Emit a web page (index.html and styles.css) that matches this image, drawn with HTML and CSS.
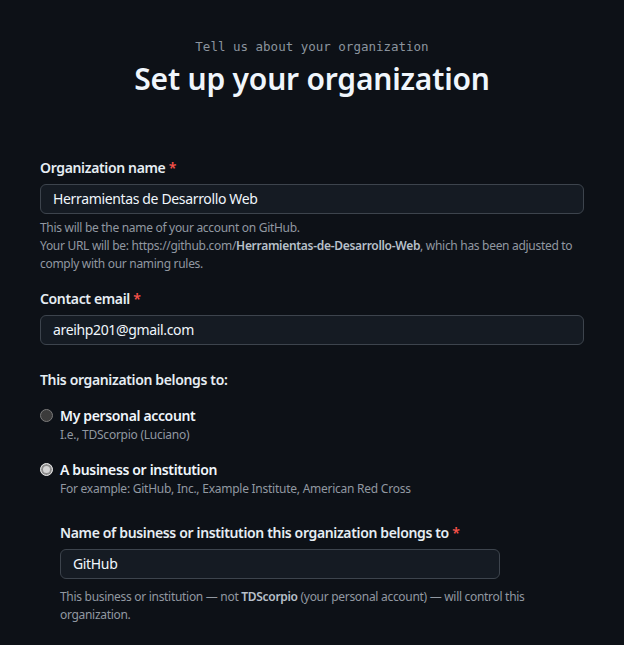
FILE: index.html
```html
<!DOCTYPE html>
<html lang="en">
<head>
<meta charset="utf-8">
<link rel="stylesheet" href="styles.css">
</head>
<body>
<main class="page">
  <header class="head">
    <p class="eyebrow">Tell us about your organization</p>
    <h1 class="title">Set up your organization</h1>
  </header>

  <form class="form">
    <div class="field">
      <label class="label">Organization name <span class="req">*</span></label>
      <div class="input">Herramientas de Desarrollo Web</div>
      <p class="note">This will be the name of your account on GitHub.<br>Your URL will be: https://github.com/<strong>Herramientas-de-Desarrollo-Web</strong>, which has been adjusted to comply with our naming rules.</p>
    </div>

    <div class="field">
      <label class="label">Contact email <span class="req">*</span></label>
      <div class="input">areihp201@gmail.com</div>
    </div>

    <div class="group">
      <p class="label">This organization belongs to:</p>
      <div class="option">
        <span class="radio"></span>
        <div class="opt-text">
          <div class="opt-title">My personal account</div>
          <div class="opt-sub">I.e., TDScorpio (Luciano)</div>
        </div>
      </div>
      <div class="option">
        <span class="radio checked"></span>
        <div class="opt-text">
          <div class="opt-title">A business or institution</div>
          <div class="opt-sub">For example: GitHub, Inc., Example Institute, American Red Cross</div>
        </div>
      </div>
      <div class="nested">
        <label class="label">Name of business or institution this organization belongs to <span class="req">*</span></label>
        <div class="input short">GitHub</div>
        <p class="note wide">This business or institution — not <strong>TDScorpio</strong> (your personal account) — will control this organization.</p>
      </div>
    </div>
  </form>
</main>
</body>
</html>
```
FILE: styles.css
```css
html, body {
  margin: 0;
  padding: 0;
  background: #0d1117;
}
body {
  font-family: "Noto Sans", "Open Sans", sans-serif;
  color: #e6edf3;
  letter-spacing: -0.35px;
}
.page {
  padding: 39px 40px 0;
}
.head {
  text-align: center;
}
.eyebrow {
  margin: 0;
  font-family: "DejaVu Sans Mono", monospace;
  font-size: 12.5px;
  line-height: 16px;
  letter-spacing: 0;
  color: #8b949e;
}
.title {
  margin: 2px 0 0;
  font-size: 30px;
  line-height: 44px;
  font-weight: 600;
  letter-spacing: -0.2px;
  color: #f0f6fc;
}
.form {
  margin-top: 57px;
}
.field {
  margin-bottom: 16px;
}
.label {
  display: block;
  margin: 0 0 6px;
  font-size: 14px;
  line-height: 20px;
  font-weight: 600;
  color: #e6edf3;
}
.req {
  color: #f85149;
}
.input {
  box-sizing: border-box;
  height: 30px;
  padding: 0 12px;
  border: 1px solid #3d444d;
  border-radius: 6px;
  background: #151b23;
  font-size: 14px;
  line-height: 28px;
  color: #f0f6fc;
}
.input.short {
  width: 440px;
}
.note {
  margin: 5px 0 0;
  font-size: 12px;
  line-height: 18px;
  letter-spacing: -0.3px;
  color: #9198a1;
}
.note.wide {
  margin-top: 9px;
}
.note strong {
  color: #b8c0ca;
  font-weight: 600;
}
.group {
  margin-top: 25px;
}
.group > .label {
  margin-bottom: 16px;
}
.option {
  display: flex;
  gap: 7px;
  margin-bottom: 16px;
}
.radio {
  flex: none;
  box-sizing: border-box;
  width: 13px;
  height: 13px;
  margin-top: 3px;
  border-radius: 50%;
  background: #3b3b3b;
  border: 1px solid #7a7a7a;
}
.radio.checked {
  background: #d4d4d4;
  border: 1px solid #e8e8e8;
  box-shadow: inset 0 0 0 2px #8d8d8d;
}
.opt-title {
  font-size: 14px;
  line-height: 20px;
  font-weight: 600;
  color: #f0f6fc;
}
.opt-sub {
  font-size: 12px;
  line-height: 18px;
  letter-spacing: -0.25px;
  color: #9198a1;
}
.nested {
  margin-left: 20px;
  padding-top: 9px;
}
```
